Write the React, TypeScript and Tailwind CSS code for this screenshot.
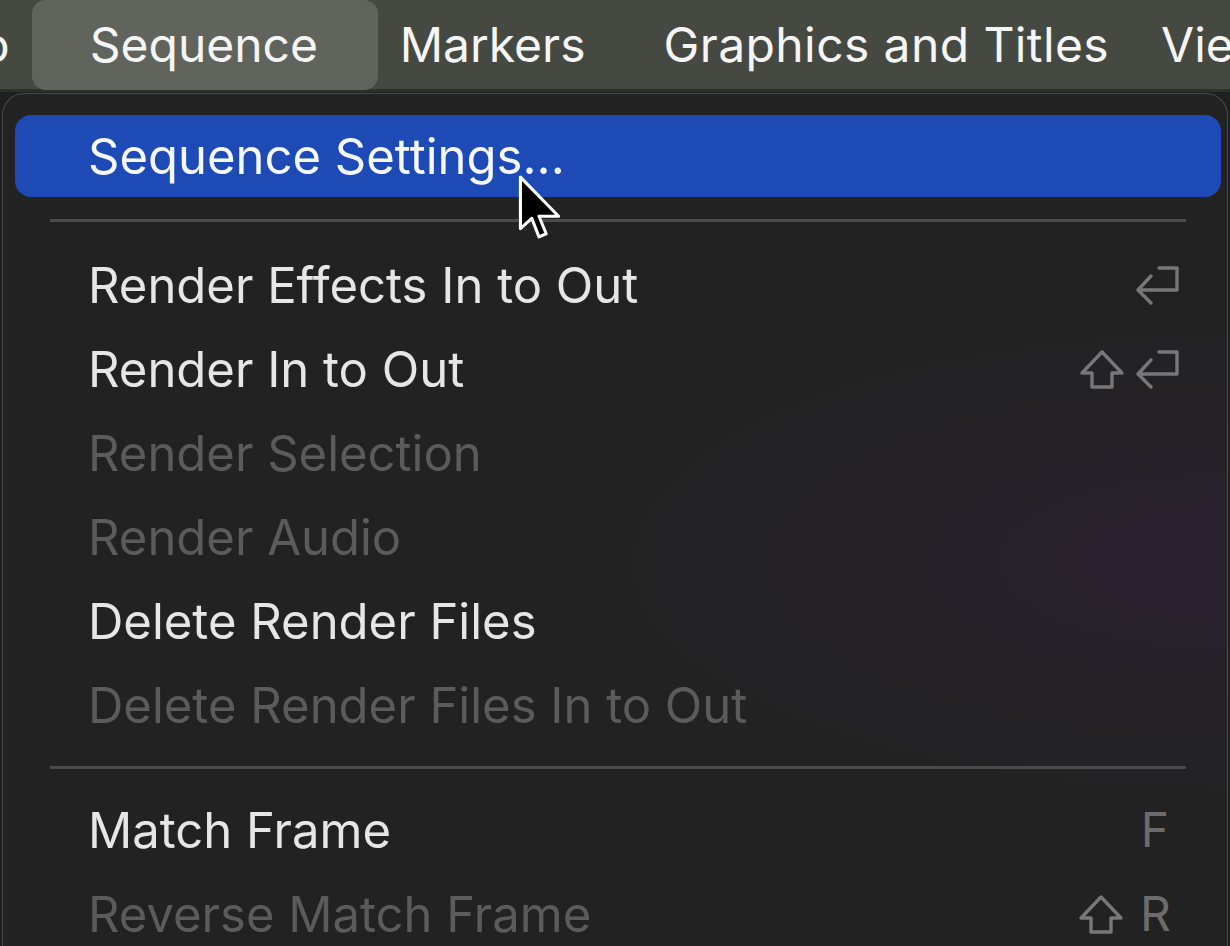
import React from "react";

const font = { fontFamily: "Inter, 'Noto Sans', 'Liberation Sans', sans-serif" };

function ReturnIcon() {
  return (
    <svg width="46" height="40" viewBox="0 0 46 40" fill="none">
      <path
        d="M24 3 H42 V25 H3 M3 25 L16 11 M3 25 L16 38"
        stroke="#777777"
        strokeWidth="3.4"
        strokeLinecap="round"
        strokeLinejoin="round"
      />
    </svg>
  );
}

function ShiftIcon() {
  return (
    <svg width="46" height="40" viewBox="0 0 46 40" fill="none">
      <path
        d="M23 3 L43 24 H33 V38 H13 V24 H3 Z"
        stroke="#777777"
        strokeWidth="3.4"
        strokeLinejoin="round"
      />
    </svg>
  );
}

type Item = {
  label: string;
  disabled?: boolean;
  highlighted?: boolean;
  shortcut?: React.ReactNode;
};

function Row({ label, disabled, highlighted, shortcut }: Item) {
  return (
    <div
      className={
        "flex items-center justify-between pl-[73px] pr-[40px] rounded-[16px] " +
        (highlighted ? "h-[82px] bg-[#1d4ab5]" : "h-[84px]")
      }
    >
      <span
        className={
          "text-[49px] leading-none whitespace-nowrap " +
          (disabled ? "text-[#5b5b5b]" : highlighted ? "text-[#f6f7fb]" : "text-[#e6e6e6]")
        }
      >
        {label}
      </span>
      {shortcut}
    </div>
  );
}

function Sep({ h }: { h: string }) {
  return (
    <div className={h + " flex items-center px-[35px]"}>
      <div className="h-[3px] w-full bg-[#4b4b4b]" />
    </div>
  );
}

export default function App() {
  return (
    <div
      className="w-[1230px] h-[946px] overflow-hidden bg-[#1f1f1f] relative"
      style={font}
    >
      {/* menu bar */}
      <div className="h-[92px] bg-[#454942] flex items-center text-[#f5f5f5] text-[48px] leading-none whitespace-nowrap border-b-[3px] border-[#2e302c]">
        <span className="ml-[-78px] shrink-0">Clip</span>
        <div className="ml-[22px] h-[90px] w-[346px] shrink-0 rounded-[14px] bg-[#60645d] flex items-center pl-[58px] self-start">
          Sequence
        </div>
        <span className="ml-[22px] shrink-0">Markers</span>
        <span className="ml-[78px] shrink-0 tracking-[0.4px]">Graphics and Titles</span>
        <span className="ml-[52px] shrink-0">View</span>
      </div>

      {/* menu panel */}
      <div className="mt-[1px] mx-[2px] rounded-t-[22px] border border-[#4a4a4a] border-b-0 h-[900px] pl-[12px] pr-[6px] pt-[21px] bg-[radial-gradient(ellipse_at_100%_52%,#2b2131_0%,#252228_18%,#222222_40%)]">
        <Row label="Sequence Settings..." highlighted />
        <Sep h="h-[46px]" />
        <Row
          label="Render Effects In to Out"
          shortcut={
            <div className="flex items-center">
              <ReturnIcon />
            </div>
          }
        />
        <Row
          label="Render In to Out"
          shortcut={
            <div className="flex items-center gap-[10px]">
              <ShiftIcon />
              <ReturnIcon />
            </div>
          }
        />
        <Row label="Render Selection" disabled />
        <Row label="Render Audio" disabled />
        <Row label="Delete Render Files" />
        <Row label="Delete Render Files In to Out" disabled />
        <Sep h="h-[41px]" />
        <Row
          label="Match Frame"
          shortcut={<span className="text-[48px] text-[#6c6c6c] leading-none pr-[12px]">F</span>}
        />
        <Row
          label="Reverse Match Frame"
          disabled
          shortcut={
            <div className="flex items-center gap-[16px] text-[48px] text-[#6c6c6c] leading-none pr-[10px]">
              <ShiftIcon />
              <span>R</span>
            </div>
          }
        />
      </div>

      {/* mouse cursor */}
      <svg
        className="absolute left-[517px] top-[174px]"
        width="46"
        height="68"
        viewBox="-3 -3 44 66"
      >
        <path
          d="M0 0 L0 50 L11 40 L18 58 L25 55 L18 38 L37 38 Z"
          fill="#000000"
          stroke="#ffffff"
          strokeWidth="3"
          strokeLinejoin="round"
        />
      </svg>
    </div>
  );
}
